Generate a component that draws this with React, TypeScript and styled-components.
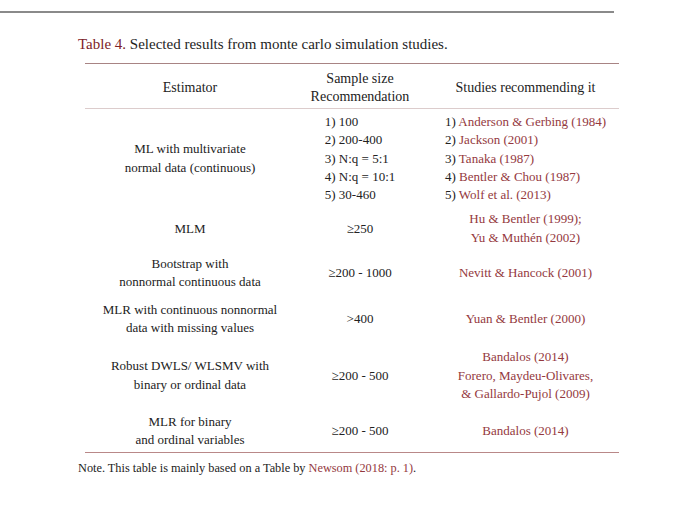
import styled, { createGlobalStyle } from 'styled-components';

const GlobalStyle = createGlobalStyle`
  html, body {
    margin: 0;
    padding: 0;
    background: #ffffff;
  }
  body {
    font-family: "Liberation Serif", "Times New Roman", serif;
    color: #222222;
  }
`;

const Page = styled.div`
  width: 680px;
  height: 505px;
  padding-top: 11px;
  box-sizing: border-box;
`;

const TopRule = styled.div`
  width: 614px;
  height: 2px;
  background: #8a8a8a;
`;

const Caption = styled.div`
  margin: 21px 0 0 78px;
  font-size: 15px;
  line-height: 20px;
  color: #1e1e1e;
`;

const CaptionLabel = styled.span`
  color: #7d2329;
`;

const Table = styled.table`
  margin: 9px 0 0 85px;
  width: 527px;
  table-layout: fixed;
  border-collapse: collapse;
  font-family: "Liberation Serif", "Times New Roman", serif;
  font-size: 13px;
  line-height: 18.4px;
  color: #222222;
`;

const HeadRow = styled.tr`
  border-top: 1.5px solid #a88484;
  border-bottom: 1px solid #dccccc;
`;

const BodyRow = styled.tr<{ $last?: boolean }>`
  border-bottom: ${({ $last }) => ($last ? '1.5px solid #b98888' : 'none')};
`;

const Th = styled.th<{ $w: number; $indent?: number }>`
  width: ${({ $w }) => $w}px;
  font-weight: normal;
  font-size: 14px;
  text-align: center;
  vertical-align: middle;
  padding: 6px 0 1px ${({ $indent }) => $indent ?? 0}px;
`;

const Td = styled.td<{ $top: number; $bottom: number; $indent?: number }>`
  text-align: center;
  vertical-align: middle;
  padding: ${({ $top }) => $top}px 0 ${({ $bottom }) => $bottom}px
    ${({ $indent }) => $indent ?? 0}px;
`;

const List = styled.div`
  display: inline-block;
  text-align: left;
`;

const Ref = styled.span`
  color: #94393e;
`;

const Note = styled.div`
  margin: 6px 0 0 78px;
  font-size: 12.3px;
  line-height: 18px;
`;

type Row = {
  estimator: string[];
  sample: string[];
  studies: string[];
  pad: [number, number];
};

const rows: Row[] = [
  {
    estimator: ['MLM'],
    sample: ['≥250'],
    studies: ['Hu & Bentler (1999);', 'Yu & Muthén (2002)'],
    pad: [4, 3.5],
  },
  {
    estimator: ['Bootstrap with', 'nonnormal continuous data'],
    sample: ['≥200 - 1000'],
    studies: ['Nevitt & Hancock (2001)'],
    pad: [4, 5],
  },
  {
    estimator: ['MLR with continuous nonnormal', 'data with missing values'],
    sample: ['>400'],
    studies: ['Yuan & Bentler (2000)'],
    pad: [4.5, 5],
  },
  {
    estimator: ['Robust DWLS/ WLSMV with', 'binary or ordinal data'],
    sample: ['≥200 - 500'],
    studies: ['Bandalos (2014)', 'Forero, Maydeu-Olivares,', '& Gallardo-Pujol (2009)'],
    pad: [5.5, 5],
  },
  {
    estimator: ['MLR for binary', 'and ordinal variables'],
    sample: ['≥200 - 500'],
    studies: ['Bandalos (2014)'],
    pad: [4, 3],
  },
];

const mlSamples = ['100', '200-400', 'N:q = 5:1', 'N:q = 10:1', '30-460'];
const mlStudies = [
  'Anderson & Gerbing (1984)',
  'Jackson (2001)',
  'Tanaka (1987)',
  'Bentler & Chou (1987)',
  'Wolf et al. (2013)',
];

const STUDY_INDENT = 7;

const Lines = ({ items }: { items: string[] }) => (
  <>
    {items.map((t, i) => (
      <div key={i}>{t}</div>
    ))}
  </>
);

const App = () => {
  return (
    <Page>
      <GlobalStyle />
      <TopRule />
      <Caption>
        <CaptionLabel>Table 4.</CaptionLabel> Selected results from monte carlo simulation studies.
      </Caption>
      <Table>
        <thead>
          <HeadRow>
            <Th $w={210}>Estimator</Th>
            <Th $w={130}>
              Sample size
              <br />
              Recommendation
            </Th>
            <Th $w={187} $indent={STUDY_INDENT}>
              Studies recommending it
            </Th>
          </HeadRow>
        </thead>
        <tbody>
          <BodyRow>
            <Td $top={4} $bottom={1.5}>
              ML with multivariate
              <br />
              normal data (continuous)
            </Td>
            <Td $top={4} $bottom={1.5}>
              <List>
                {mlSamples.map((s, i) => (
                  <div key={i}>
                    {i + 1}) {s}
                  </div>
                ))}
              </List>
            </Td>
            <Td $top={4} $bottom={1.5} $indent={STUDY_INDENT}>
              <List>
                {mlStudies.map((s, i) => (
                  <div key={i}>
                    {i + 1}) <Ref>{s}</Ref>
                  </div>
                ))}
              </List>
            </Td>
          </BodyRow>
          {rows.map((r, i) => (
            <BodyRow key={i} $last={i === rows.length - 1}>
              <Td $top={r.pad[0]} $bottom={r.pad[1]}>
                <Lines items={r.estimator} />
              </Td>
              <Td $top={r.pad[0]} $bottom={r.pad[1]}>
                <Lines items={r.sample} />
              </Td>
              <Td $top={r.pad[0]} $bottom={r.pad[1]} $indent={STUDY_INDENT}>
                <Ref>
                  <Lines items={r.studies} />
                </Ref>
              </Td>
            </BodyRow>
          ))}
        </tbody>
      </Table>
      <Note>
        Note. This table is mainly based on a Table by <Ref>Newsom (2018: p. 1)</Ref>.
      </Note>
    </Page>
  );
};

export default App;
